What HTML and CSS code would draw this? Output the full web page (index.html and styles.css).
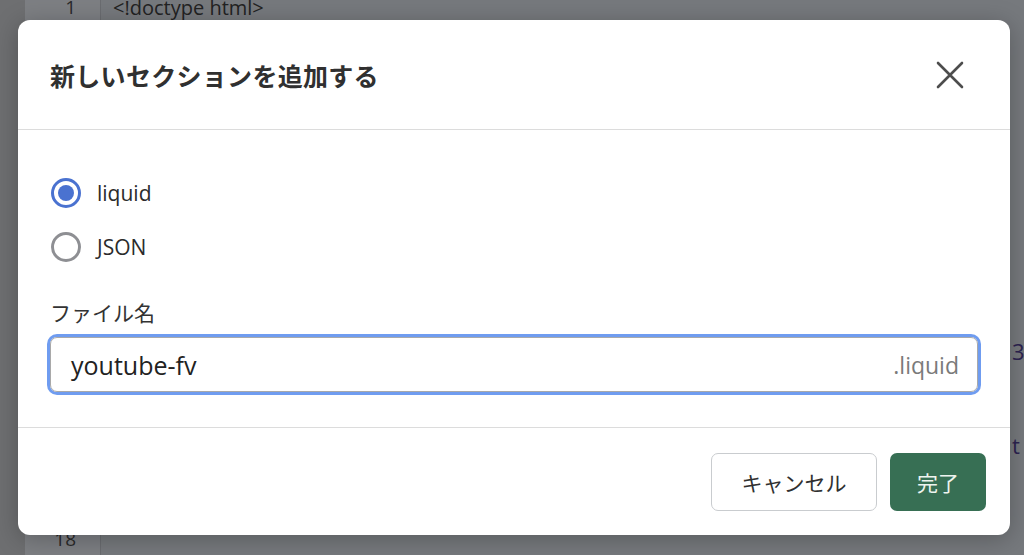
FILE: index.html
```html
<!DOCTYPE html>
<html lang="ja">
<head>
  <meta charset="UTF-8" />
  <title>新しいセクションを追加する</title>
  <link rel="stylesheet" href="styles.css">
</head>
<body>
  <div class="editor">
    <div class="rail"></div>
    <div class="gutter">
      <div class="ln">1</div>
      <div class="ln"></div><div class="ln"></div><div class="ln"></div><div class="ln"></div>
      <div class="ln"></div><div class="ln"></div><div class="ln"></div><div class="ln"></div>
      <div class="ln"></div><div class="ln"></div><div class="ln"></div><div class="ln"></div>
      <div class="ln"></div><div class="ln"></div><div class="ln"></div><div class="ln"></div>
      <div class="ln">18</div>
    </div>
    <div class="code">
      <div class="line">&lt;!doctype html&gt;</div>
      <div class="line"></div>
      <div class="line"></div>
      <div class="line"></div>
      <div class="line"></div>
      <div class="line"></div>
      <div class="line"></div>
      <div class="line"></div>
      <div class="line"></div>
      <div class="line"></div>
      <div class="line"></div>
      <div class="line"><span class="edge">3</span></div>
      <div class="line"></div>
      <div class="line"></div>
      <div class="line"><span class="edge">t</span></div>
      <div class="line"></div>
      <div class="line"></div>
      <div class="line"></div>
    </div>
  </div>

  <div class="overlay">
    <div class="modal">
      <div class="modal-head">
        <h2 class="modal-title">新しいセクションを追加する</h2>
        <button class="close" aria-label="閉じる">
          <svg width="28" height="28" viewBox="0 0 28 28">
            <path d="M2 2 L26 26 M26 2 L2 26" stroke="#4d4d4d" stroke-width="2.6" stroke-linecap="round" fill="none"/>
          </svg>
        </button>
      </div>

      <div class="modal-body">
        <label class="radio-row">
          <span class="radio checked"></span>
          <span class="radio-text">liquid</span>
        </label>
        <label class="radio-row">
          <span class="radio"></span>
          <span class="radio-text">JSON</span>
        </label>

        <div class="field-label">ファイル名</div>
        <div class="field">
          <span class="field-value">youtube-fv</span>
          <span class="field-suffix">.liquid</span>
        </div>
      </div>

      <div class="modal-foot">
        <button class="btn btn-cancel">キャンセル</button>
        <button class="btn btn-done">完了</button>
      </div>
    </div>
  </div>
</body>
</html>
```

FILE: styles.css
```css
body {
  margin: 0;
  width: 1024px;
  height: 555px;
  overflow: hidden;
  position: relative;
  font-family: "Open Sans", "Noto Sans CJK JP", sans-serif;
  background: #6b6c6e;
}

/* editor behind the dialog */
.editor { display: flex; height: 555px; }
.rail { width: 25px; background: #6e6f71; }
.gutter {
  width: 75px;
  background: #7d7f83;
  border-right: 1px solid #6a6c70;
  margin-top: -8px;
}
.ln {
  height: 31.3px;
  line-height: 31.3px;
  text-align: right;
  padding-right: 24px;
  font-size: 19px;
  color: #2a2a2a;
}
.code {
  flex: 1;
  background: #76797d;
  margin-top: -8px;
  padding-left: 12px;
}
.line {
  height: 31.3px;
  line-height: 31.3px;
  font-size: 20px;
  color: #222;
  white-space: pre;
  position: relative;
}
.edge { position: absolute; left: 899px; font-size: 22px; color: #2c2350; }

/* dialog */
.overlay {
  position: absolute;
  inset: 0;
  padding: 20px 14px 0 18px;
}
.modal {
  width: 992px;
  height: 515px;
  background: #fff;
  border-radius: 12px;
  box-shadow: 0 4px 24px rgba(0, 0, 0, 0.25);
  display: flex;
  flex-direction: column;
}
.modal-head {
  height: 109px;
  border-bottom: 1px solid #dcdcdc;
  display: flex;
  align-items: center;
  justify-content: space-between;
  padding: 0 40px 0 32px;
}
.modal-title {
  margin: 0;
  font-size: 25px;
  font-weight: 700;
  color: #303030;
  letter-spacing: 0.3px;
}
.close {
  width: 40px;
  height: 40px;
  border: 0;
  background: none;
  padding: 0;
  display: flex;
  align-items: center;
  justify-content: center;
}

.modal-body {
  padding: 36px 32px 35px;
  border-bottom: 1px solid #dcdcdc;
}
.radio-row {
  height: 54px;
  display: flex;
  align-items: center;
}
.radio {
  width: 30px;
  height: 30px;
  box-sizing: border-box;
  border: 3px solid #8e8f93;
  border-radius: 50%;
  display: flex;
  align-items: center;
  justify-content: center;
  margin-left: 1px;
}
.radio.checked { border-color: #4a72d0; }
.radio.checked::after {
  content: "";
  width: 16px;
  height: 16px;
  border-radius: 50%;
  background: #4a72d0;
}
.radio-text { margin-left: 16px; font-size: 21px; color: #2b2b2b; }

.field-label {
  margin-top: 26px;
  height: 26px;
  line-height: 26px;
  font-size: 21px;
  color: #333;
}
.field {
  margin-top: 11px;
  height: 55px;
  box-sizing: border-box;
  border: 1px solid #a9a9a9;
  border-radius: 7px;
  box-shadow: 0 0 0 3px #6f9cf0;
  display: flex;
  align-items: center;
  justify-content: space-between;
  padding: 0 18px 0 20px;
}
.field-value { font-size: 25px; color: #222; }
.field-suffix { font-size: 23px; color: #7a7a7a; }

.modal-foot {
  flex: 1;
  display: flex;
  align-items: center;
  justify-content: flex-end;
  gap: 13px;
  padding-right: 24px;
}
.btn {
  height: 58px;
  border-radius: 7px;
  font-family: "Open Sans", "Noto Sans CJK JP", sans-serif;
  font-size: 21px;
}
.btn-cancel {
  width: 166px;
  background: #fff;
  border: 1px solid #c9cccf;
  color: #303030;
}
.btn-done {
  width: 96px;
  background: #376f54;
  border: 0;
  color: #eef4ef;
}
```
